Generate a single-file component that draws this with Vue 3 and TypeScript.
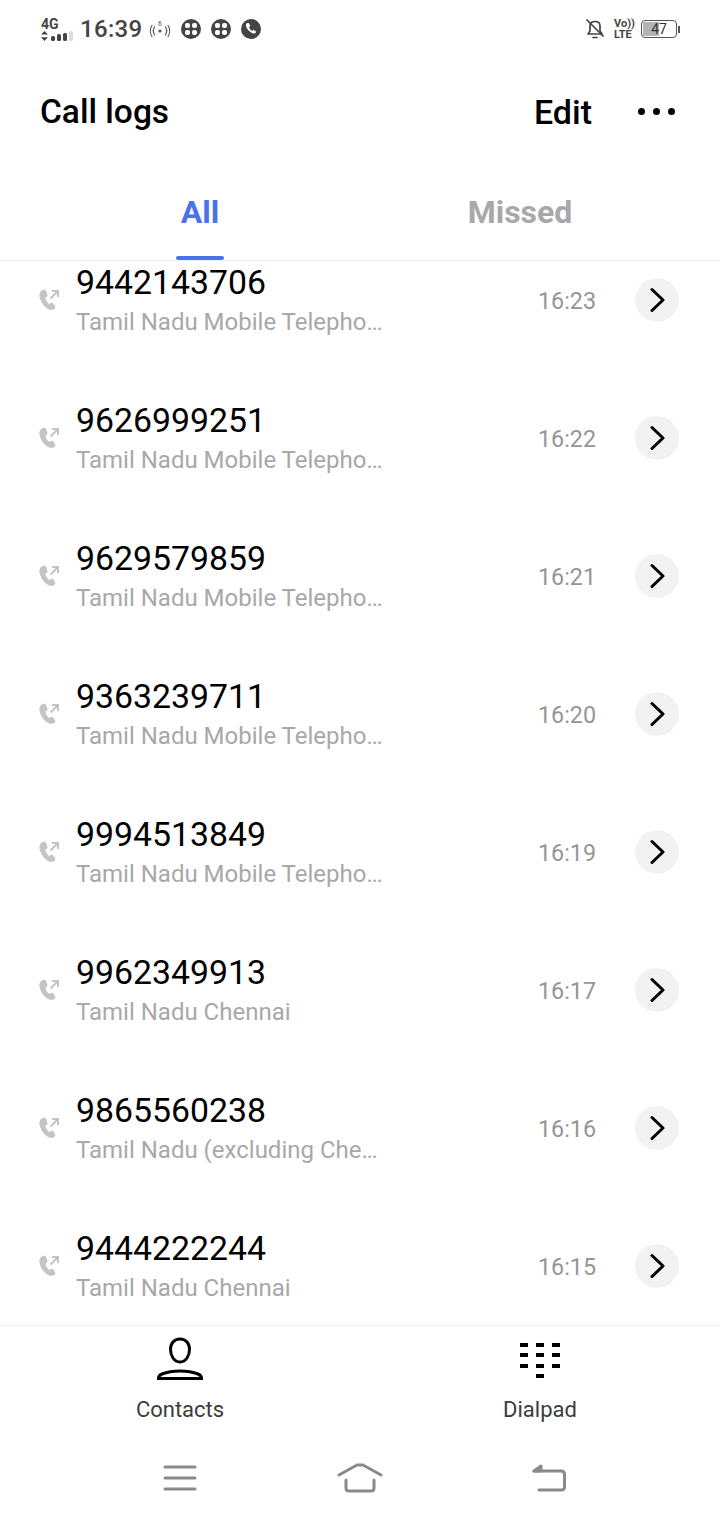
<script setup lang="ts">
interface CallRow { num: string; place: string; time: string }
const rows: CallRow[] = [
  { num: '9442143706', place: 'Tamil Nadu Mobile Telephone Circle', time: '16:23' },
  { num: '9626999251', place: 'Tamil Nadu Mobile Telephone Circle', time: '16:22' },
  { num: '9629579859', place: 'Tamil Nadu Mobile Telephone Circle', time: '16:21' },
  { num: '9363239711', place: 'Tamil Nadu Mobile Telephone Circle', time: '16:20' },
  { num: '9994513849', place: 'Tamil Nadu Mobile Telephone Circle', time: '16:19' },
  { num: '9962349913', place: 'Tamil Nadu Chennai', time: '16:17' },
  { num: '9865560238', place: 'Tamil Nadu (excluding Chennai Metro)', time: '16:16' },
  { num: '9444222244', place: 'Tamil Nadu Chennai', time: '16:15' },
]
const bars = [5, 7, 8, 10]
</script>

<template>
  <div class="screen">
    <div class="status">
      <div class="status-left">
        <div class="net">
          <span class="net-label">4G</span>
          <div class="net-bars">
            <svg class="arrows" width="7" height="10" viewBox="0 0 7 10"><path d="M3.500 0 7 3.600H0zM0 6.200h7L3.500 10z" fill="#444" /></svg>
            <i v-for="(h, i) in bars" :key="i" class="bar" :class="{ dim: i === 3 }" :style="{ height: h + 'px' }"></i>
          </div>
        </div>
        <span class="clock">16:39</span>
        <svg class="hotspot" width="22" height="20" viewBox="0 0 22 20" fill="none" stroke="#555" stroke-width="1.200">
          <circle cx="11" cy="12" r="1.600" fill="#555" stroke="none" />
          <path d="M6 7.500c-2 2.600-2 6.400 0 9M3.200 6c-2.400 3.500-2.400 8.500 0 12M16 7.500c2 2.600 2 6.400 0 9M18.800 6c2.400 3.500 2.400 8.500 0 12" />
          <text x="11" y="7" font-size="7" text-anchor="middle" fill="#555" stroke="none" font-family="Roboto, sans-serif">6</text>
        </svg>
        <svg v-for="n in 2" :key="n" class="round" width="20" height="20" viewBox="0 0 20 20">
          <circle cx="10" cy="10" r="10" fill="#444" />
          <rect x="4" y="4" width="5" height="5" rx="2" fill="#fff" />
          <rect x="11" y="4" width="5" height="5" rx="2" fill="#fff" />
          <rect x="4" y="11" width="5" height="5" rx="2" fill="#fff" />
          <rect x="11" y="11" width="5" height="5" rx="2" fill="#fff" />
        </svg>
        <svg class="round" width="20" height="20" viewBox="0 0 20 20">
          <circle cx="10" cy="10" r="10" fill="#444" />
          <path d="M5.500 4.500c-1 1.200-.6 3.600 1.500 6.200 2.300 2.800 5.300 4.300 7 3.600.7-.3 1.200-1 1.300-1.500l-2.800-2-1.400 1.100c-1.300-.7-2.600-2.300-3.100-3.700l1.300-1.200-1.600-3c-.7 0-1.600.1-2.200.5z" fill="#fff" />
        </svg>
      </div>
      <div class="status-right">
        <svg class="bell" width="18" height="20" viewBox="0 0 18 20" fill="none" stroke="#444" stroke-width="1.700" stroke-linecap="round" stroke-linejoin="round">
          <path d="M4 6.500C4 4 6 2.500 9 2.500s5 1.500 5 4.500v5l2 3H2l2-3z" />
          <path d="M7 18.500h4" />
          <path d="M1 1l16 16" />
        </svg>
        <div class="volte"><span>Vo))</span><span>LTE</span></div>
        <div class="battery">
          <div class="battery-body">
            <div class="battery-fill"></div>
            <span class="battery-num">47</span>
          </div>
          <i class="battery-tip"></i>
        </div>
      </div>
    </div>

    <header class="head">
      <h1 class="title">Call logs</h1>
      <div class="head-actions">
        <span class="edit">Edit</span>
        <div class="dots"><i></i><i></i><i></i></div>
      </div>
    </header>

    <nav class="tabs">
      <div class="tab active">All<i class="underline"></i></div>
      <div class="tab">Missed</div>
    </nav>

    <main class="list">
      <div class="list-inner">
        <div v-for="r in rows" :key="r.num" class="row">
          <svg class="call-icon" width="22" height="22" viewBox="0 0 22 22" fill="none">
            <path d="M4.300 1.200C2 2.500 1 4.500 1.500 7.500c.7 4.500 3.500 9 7.500 11.800 2.700 1.800 5.300 2 7.300.6 1-.7 1.300-1.800.8-2.700l-1.800-2.600c-.6-.8-1.500-1-2.400-.6l-1.700.9c-1.800-1.400-3.300-3.700-3.900-5.900l1.500-1.200c.8-.6 1-1.500.6-2.400L8.100 2C7.400.8 5.700.4 4.300 1.200z" fill="#c4c4c4" />
            <path d="M12.500 9.500l7-7M14 2h6v6" stroke="#c4c4c4" stroke-width="2" />
          </svg>
          <div class="info">
            <div class="num">{{ r.num }}</div>
            <div class="place">{{ r.place }}</div>
          </div>
          <div class="time">{{ r.time }}</div>
          <div class="go">
            <svg width="16" height="26" viewBox="0 0 16 26" fill="none" stroke="#000" stroke-width="3" stroke-linecap="round" stroke-linejoin="round"><path d="M3 2.500 14 13 3 23.500" /></svg>
          </div>
        </div>
      </div>
    </main>

    <div class="dock">
      <div class="dock-item">
        <svg width="48" height="44" viewBox="0 0 48 44" fill="none" stroke="#000" stroke-width="3">
          <path d="M24 2c6 0 9.500 4.500 9.500 10.500S30 25 24 25s-9.500-6.500-9.500-12.500S18 2 24 2z" />
          <path d="M2.500 41.500c0-2 1-3.500 3.500-4.500 5-2 11-3 18-3s13 1 18 3c2.500 1 3.500 2.500 3.500 4.500z" />
        </svg>
        <span class="dock-label">Contacts</span>
      </div>
      <div class="dock-item">
        <div class="keypad">
          <i v-for="n in 10" :key="n" :class="{ last: n === 10 }"></i>
        </div>
        <span class="dock-label">Dialpad</span>
      </div>
    </div>

    <div class="navbar">
      <svg width="34" height="26" viewBox="0 0 34 26" stroke="#8a8a8a" stroke-width="3" stroke-linecap="round"><path d="M2 2h30M2 13h30M2 24h30" /></svg>
      <svg class="nav-home" width="46" height="30" viewBox="0 0 46 30" fill="none" stroke="#8a8a8a" stroke-width="3" stroke-linecap="round" stroke-linejoin="round"><path d="M2 12 20 2h6l18 10M9 17v8c0 2 1 3 3 3h22c2 0 3-1 3-3v-8" /></svg>
      <svg class="nav-back" width="34" height="28" viewBox="0 0 34 28" fill="none" stroke="#8a8a8a" stroke-width="3" stroke-linecap="round" stroke-linejoin="round"><path d="M7 26h22c2 0 3.500-1 3.500-3V10c0-2-1.500-3-3.500-3H2" /><path d="M2 7 9 2v5z" fill="#8a8a8a" /></svg>
    </div>
  </div>
</template>

<style scoped>
.screen { width: 720px; height: 1520px; background: #fff; display: flex; flex-direction: column; overflow: hidden; font-family: Roboto, "Noto Sans", sans-serif; color: #000; }
.status { height: 56px; flex: none; display: flex; align-items: center; justify-content: space-between; padding: 2px 40px 0 41px; box-sizing: border-box; }
.status-left, .status-right { display: flex; align-items: center; }
.net { width: 32px; display: flex; flex-direction: column; }
.net-label { font-size: 14px; line-height: 12px; font-weight: 700; color: #444; }
.net-bars { display: flex; align-items: flex-end; gap: 1.500px; height: 11px; }
.arrows { margin-right: 1px; }
.bar { width: 4.500px; background: #444; border-radius: 1.500px; display: block; }
.bar.dim { background: #ddd; }
.clock { font-size: 24px; font-weight: 500; color: #444; margin-left: 7px; letter-spacing: .3px; }
.hotspot { margin-left: 7px; }
.round { margin-left: 10px; }
.volte { display: flex; flex-direction: column; font-size: 11px; line-height: 11px; font-weight: 700; color: #444; width: 18px; margin-left: 10px; margin-right: 9px; white-space: nowrap; }
.battery { display: flex; align-items: center; }
.battery-body { position: relative; width: 34px; height: 16px; border: 1.500px solid #555; border-radius: 4px; box-sizing: content-box; overflow: hidden; display: flex; align-items: center; justify-content: center; }
.battery-fill { position: absolute; left: 1px; top: 1px; bottom: 1px; width: 47%; background: #b4b4b4; }
.battery-num { position: relative; font-size: 14px; color: #333; }
.battery-tip { width: 2px; height: 7px; background: #555; margin-left: 1px; display: block; }
.head { height: 112px; flex: none; display: flex; align-items: center; justify-content: space-between; padding: 0 45px 0 40px; }
.title { margin: 0; font-size: 33.500px; font-weight: 500; line-height: 1; }
.head-actions { display: flex; align-items: center; gap: 46px; }
.edit { font-size: 34px; font-weight: 500; line-height: 1; }
.dots { display: flex; gap: 8px; margin-top: -2px; }
.dots i { width: 7px; height: 7px; border-radius: 50%; background: #000; display: block; }
.tabs { height: 92px; flex: none; display: flex; padding: 0 40px; border-bottom: 1px solid #eee; box-sizing: content-box; }
.tab { flex: 1; display: flex; align-items: center; justify-content: center; font-size: 32px; font-weight: 700; color: #a8a8a8; position: relative; padding-bottom: 4px; box-sizing: border-box; }
.tab.active { color: #4a72ec; }
.underline { position: absolute; left: 50%; bottom: 0; width: 48px; height: 4px; margin-left: -24px; border-radius: 2px; background: #4a72ec; }
.list { height: 1064px; flex: none; overflow: hidden; }
.list-inner { margin-top: -30px; }
.row { height: 138px; display: flex; align-items: center; padding: 0 41px 0 38px; }
.call-icon { flex: none; }
.info { width: 311px; margin-left: 16px; flex: none; padding-top: 2px; }
.num { font-size: 33.800px; line-height: 40px; color: #000; margin-bottom: 4px; margin-top: -3px; }
.place { font-size: 24px; line-height: 30px; color: #a8a8a8; white-space: nowrap; overflow: hidden; text-overflow: ellipsis; }
.time { margin-left: auto; font-size: 23.300px; color: #969696; margin-right: 39px; padding-top: 2px; }
.go { width: 44px; height: 44px; border-radius: 50%; background: #f2f2f2; display: flex; align-items: center; justify-content: center; }
.dock { height: 116px; flex: none; border-top: 1px solid #f2f2f2; display: flex; box-sizing: border-box; }
.dock-item { width: 360px; display: flex; flex-direction: column; align-items: center; padding-top: 11px; box-sizing: border-box; }
.dock-label { font-size: 22px; color: #3c3c3c; margin-top: 16px; line-height: 26px; }
.keypad { display: grid; grid-template-columns: repeat(3, 8px); column-gap: 8px; row-gap: 6.300px; height: 44px; padding-top: 6px; align-content: start; box-sizing: border-box; }
.keypad i { height: 4px; background: #000; display: block; }
.keypad i.last { grid-column: 2; }
.navbar { height: 79px; flex: none; display: flex; align-items: center; padding: 0 0 5px 163px; box-sizing: border-box; }
.nav-home { margin-left: 140px; }
.nav-back { margin-left: 149px; }
</style>
